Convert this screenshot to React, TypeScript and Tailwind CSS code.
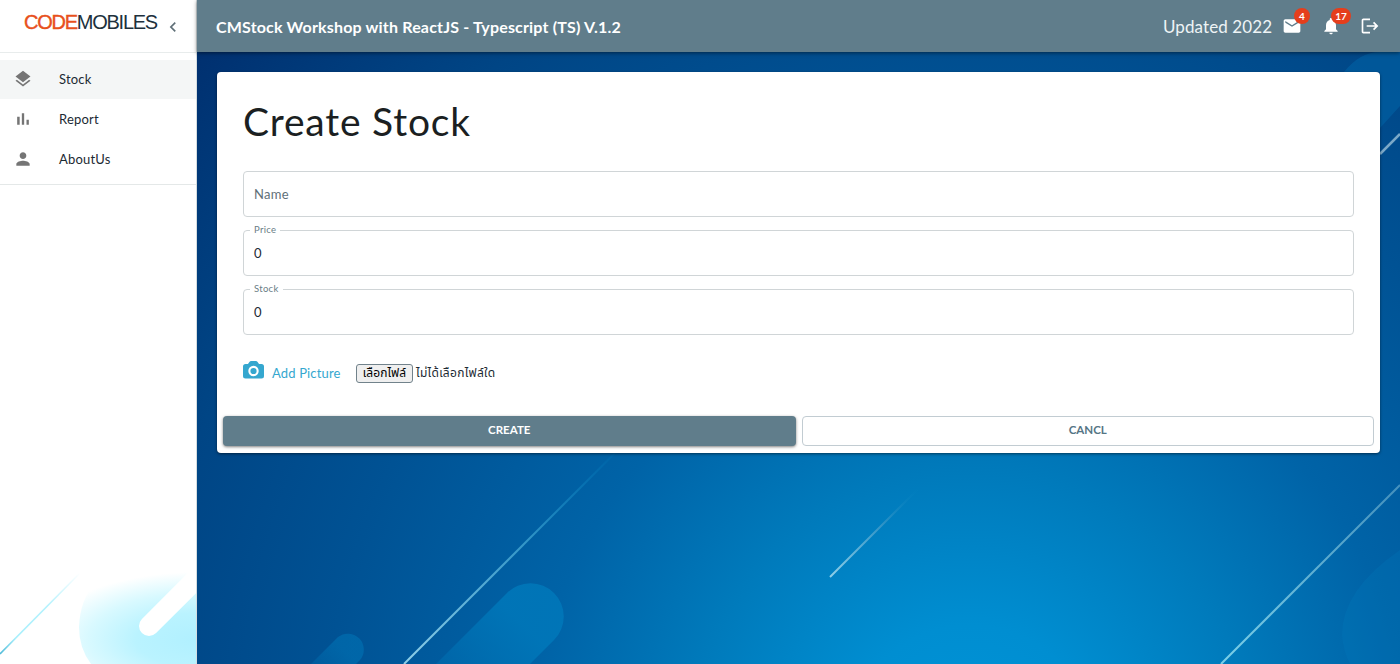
import React from "react";
import { MdLayers, MdPerson, MdMail, MdNotifications, MdLogout, MdChevronLeft } from "react-icons/md";

function BarsIcon({ className }: { className?: string }) {
  return (
    <svg className={className} viewBox="0 0 24 24" fill="currentColor">
      <path d="M5 9.2h3V19H5zM10.6 5h2.8v14h-2.8zm5.6 8H19v6h-2.8z" />
    </svg>
  );
}

function CameraIcon({ className }: { className?: string }) {
  return (
    <svg className={className} viewBox="0 0 21 18" fill="currentColor">
      <path
        fillRule="evenodd"
        d="M2.5 3H5L6.2 1.2Q7 0 8.3 0H12.7Q14 0 14.8 1.2L16 3H18.5Q21 3 21 5.5V15Q21 17.5 18.5 17.5H2.5Q0 17.5 0 15V5.5Q0 3 2.5 3ZM10.5 4.8A5.2 5.2 0 1 0 10.5 15.2A5.2 5.2 0 1 0 10.5 4.8Z"
      />
      <circle cx="10.5" cy="10" r="3.1" />
    </svg>
  );
}

const menu = [
  { label: "Stock", icon: MdLayers, style: "bg-[#f4f6f6]" },
  { label: "Report", icon: BarsIcon, style: "" },
  { label: "AboutUs", icon: MdPerson, style: "" },
];

function Sidebar() {
  return (
    <aside className="relative flex w-[197px] shrink-0 flex-col border-r border-[#d5dde0] bg-white">
      <svg className="absolute bottom-0 left-0" width="196" height="104" viewBox="0 560 196 104">
        <defs>
          <radialGradient id="cloud" gradientUnits="userSpaceOnUse" cx="0" cy="0" r="1" gradientTransform="translate(200 640) scale(160 68)">
            <stop offset="0" stopColor="#b0f0ff" />
            <stop offset="0.4" stopColor="#baf3ff" />
            <stop offset="0.7" stopColor="#d8f9ff" />
            <stop offset="1" stopColor="#ffffff" />
          </radialGradient>
          <linearGradient id="thin" gradientUnits="userSpaceOnUse" x1="0" y1="655" x2="80" y2="573">
            <stop offset="0" stopColor="#4cb8d6" />
            <stop offset="0.2" stopColor="#a8effc" />
            <stop offset="0.6" stopColor="#b4f2fd" />
            <stop offset="1" stopColor="#ffffff" />
          </linearGradient>
        </defs>
        <path d="M91 664Q79 648 79 627Q80 600 95 583Q120 570 196 566V664Z" fill="url(#cloud)" />
        <path d="M149 626L205 570" stroke="#fff" strokeWidth="20" strokeLinecap="round" />
        <path d="M0 654L80 573" stroke="url(#thin)" strokeWidth="1.6" />
      </svg>
      <div className="flex h-[53px] items-start border-b border-[#e8ecec] pl-6">
        <div className="mt-[9px] w-[134px] whitespace-nowrap font-['Liberation_Sans'] text-[20px] leading-[26px] tracking-[-1.25px] text-[#20303c]">
          <span className="text-[#e8501c] [-webkit-text-stroke:0.4px_#e8501c]">CODE</span>MOBILES
        </div>
        <MdChevronLeft className="ml-[5px] mt-[17px] h-5 w-5 text-[#607078]" />
      </div>
      <nav className="mt-[7px] flex h-[125px] flex-col border-b border-[#e4e8e8]">
        {menu.map(({ label, icon: Icon, style }) => (
          <a key={label} className={`flex h-10 items-center border-b border-transparent bg-clip-padding pl-[13px] ${style}`}>
            <Icon className="-mt-[2px] h-5 w-5 text-[#757575]" />
            <span className="ml-[26px] text-[13px] tracking-[0.2px] text-[#1c2a33]">{label}</span>
          </a>
        ))}
      </nav>
    </aside>
  );
}

function Backdrop() {
  return (
    <svg className="absolute inset-0 h-full w-full" viewBox="197 0 1203 664">
      <defs>
        <radialGradient id="sea" gradientUnits="userSpaceOnUse" cx="970" cy="750" r="1040">
          <stop offset="0" stopColor="#0094d8" />
          <stop offset="0.12" stopColor="#008ed1" />
          <stop offset="0.27" stopColor="#007abb" />
          <stop offset="0.42" stopColor="#0063a7" />
          <stop offset="0.62" stopColor="#005294" />
          <stop offset="0.8" stopColor="#004585" />
          <stop offset="1" stopColor="#003070" />
        </radialGradient>
        <linearGradient id="ray" x1="0" y1="1" x2="1" y2="0">
          <stop offset="0" stopColor="#8fcfe8" />
          <stop offset="0.6" stopColor="#2f93c6" />
          <stop offset="1" stopColor="#0080c0" stopOpacity="0.1" />
        </linearGradient>
        <linearGradient id="beam" x1="0" y1="1" x2="1" y2="0">
          <stop offset="0" stopColor="#7bd0e8" />
          <stop offset="1" stopColor="#4591bd" />
        </linearGradient>
        <linearGradient id="pill" x1="0" y1="1" x2="1" y2="0">
          <stop offset="0.1" stopColor="#0078ba" stopOpacity="0" />
          <stop offset="0.75" stopColor="#0078ba" stopOpacity="0.85" />
        </linearGradient>
      </defs>
      <rect x="197" y="0" width="1203" height="664" fill="url(#sea)" />
      <path d="M400 700L507 593A33 33 0 0 1 554 640L447 747Z" fill="url(#pill)" />
      <path d="M290 685L338 637A16 16 0 0 1 360 660L312 708Z" fill="url(#pill)" opacity="0.6" />
      <path d="M1344 72Q1360 52 1380 52H1400V106L1380 128V72Z" fill="#0062a5" opacity="0.6" />
      <path d="M1400 550Q1342 590 1342 635Q1343 650 1350 664H1400Z" fill="#0080c2" opacity="0.2" />
      <path d="M404 664L615 453" stroke="url(#ray)" strokeWidth="2" />
      <path d="M830 577L918 489" stroke="url(#ray)" strokeWidth="2" />
      <path d="M1221 664L1400 485" stroke="url(#beam)" strokeWidth="2" />
      <path d="M1380 154L1400 134" stroke="#7ba9c8" strokeWidth="2.5" />
    </svg>
  );
}

function Badge({ value, style }: { value: string; style: string }) {
  return (
    <span className={`absolute flex h-4 items-center justify-center rounded-full bg-[#e53e1c] text-[10px] font-bold text-white ${style}`}>
      {value}
    </span>
  );
}

function Header() {
  return (
    <header className="relative flex h-[52px] shrink-0 items-center bg-[#607d8b] pl-[19px] text-white shadow-[0_1px_4px_rgba(0,0,0,0.5)]">
      <h1 className="mt-[2px] w-[420px] whitespace-nowrap text-[16px] font-bold tracking-[0.17px]">
        CMStock Workshop with ReactJS - Typescript (TS) V.1.2
      </h1>
      <div className="ml-auto flex items-center">
        <span className="mr-[10px] mt-[2px] w-[109px] whitespace-nowrap text-[17px] tracking-[0.1px] text-[#eef4f6]">Updated 2022</span>
        <div className="relative mr-[19px]">
          <MdMail className="h-5 w-5" />
          <Badge value="4" style="-top-[8px] left-[12px] w-4" />
        </div>
        <div className="relative mr-[19px]">
          <MdNotifications className="h-5 w-5" />
          <Badge value="17" style="-top-[8px] left-[10px] w-5" />
        </div>
        <MdLogout className="mr-5 h-5 w-5" />
      </div>
    </header>
  );
}

function Field({ label, value, gap }: { label: string; value?: string; gap: string }) {
  return (
    <div className={`relative flex h-[46px] items-center rounded-[4px] border border-[#d0d5d7] px-[10px] text-[13px] ${gap}`}>
      {value === undefined ? (
        <span className="mt-[2px] tracking-[0.3px] text-[#5f7078]">{label}</span>
      ) : (
        <>
          <span className="absolute -top-[7px] left-[6px] bg-white px-1 text-[9.5px] leading-[12px] tracking-[0.3px] text-[#6a7d86]">{label}</span>
          <span className="mt-[2px] text-[#1c2a33]">{value}</span>
        </>
      )}
    </div>
  );
}

function StockForm() {
  return (
    <form className="relative mx-5 mt-5 flex h-[381px] flex-col rounded-[4px] bg-white px-[6px] shadow-[0_1px_3px_rgba(0,0,0,0.5)]">
      <div className="flex flex-col px-5">
        <h2 className="mt-[24px] h-[50px] whitespace-nowrap text-[39px] leading-[50px] tracking-[0.8px] text-[#1b1f22]">Create Stock</h2>
        <Field label="Name" gap="mt-[25px]" />
        <Field label="Price" value="0" gap="mt-[13px]" />
        <Field label="Stock" value="0" gap="mt-[13px]" />
        <div className="mt-[24px] flex h-[26px] items-center">
          <CameraIcon className="-mt-[4px] h-[18px] w-[21px] text-[#35a7cf]" />
          <span className="ml-2 mt-[4px] w-[84px] whitespace-nowrap text-[13px] tracking-[0.15px] text-[#35a7cf]">Add Picture</span>
          <span className="mt-[2px] flex h-[19px] w-[57px] items-center justify-center whitespace-nowrap rounded-[3px] border border-[#71828b] bg-[#efefef] text-[12px] tracking-[0.1px] text-black">เลือกไฟล์</span>
          <span className="ml-[3px] mt-[2px] whitespace-nowrap text-[12px] tracking-[0.3px] text-[#1c2a33]">ไม่ได้เลือกไฟล์ใด</span>
        </div>
      </div>
      <div className="mt-[31px] grid grid-cols-2 gap-[6px] text-[11.5px] font-bold">
        <button type="button" className="h-[30px] rounded-[4px] bg-[#607d8b] pb-[2px] text-white shadow-[0_1px_3px_rgba(0,0,0,0.5)]">CREATE</button>
        <button type="button" className="h-[30px] rounded-[4px] border border-[#c2ccd2] pb-[2px] text-[#557585]">CANCL</button>
      </div>
    </form>
  );
}

export default function App() {
  return (
    <div className="flex h-[664px] w-[1400px] overflow-hidden font-['Lato','Noto_Sans_Thai',sans-serif]">
      <Sidebar />
      <main className="relative flex min-w-0 flex-1 flex-col">
        <Backdrop />
        <Header />
        <StockForm />
      </main>
    </div>
  );
}
